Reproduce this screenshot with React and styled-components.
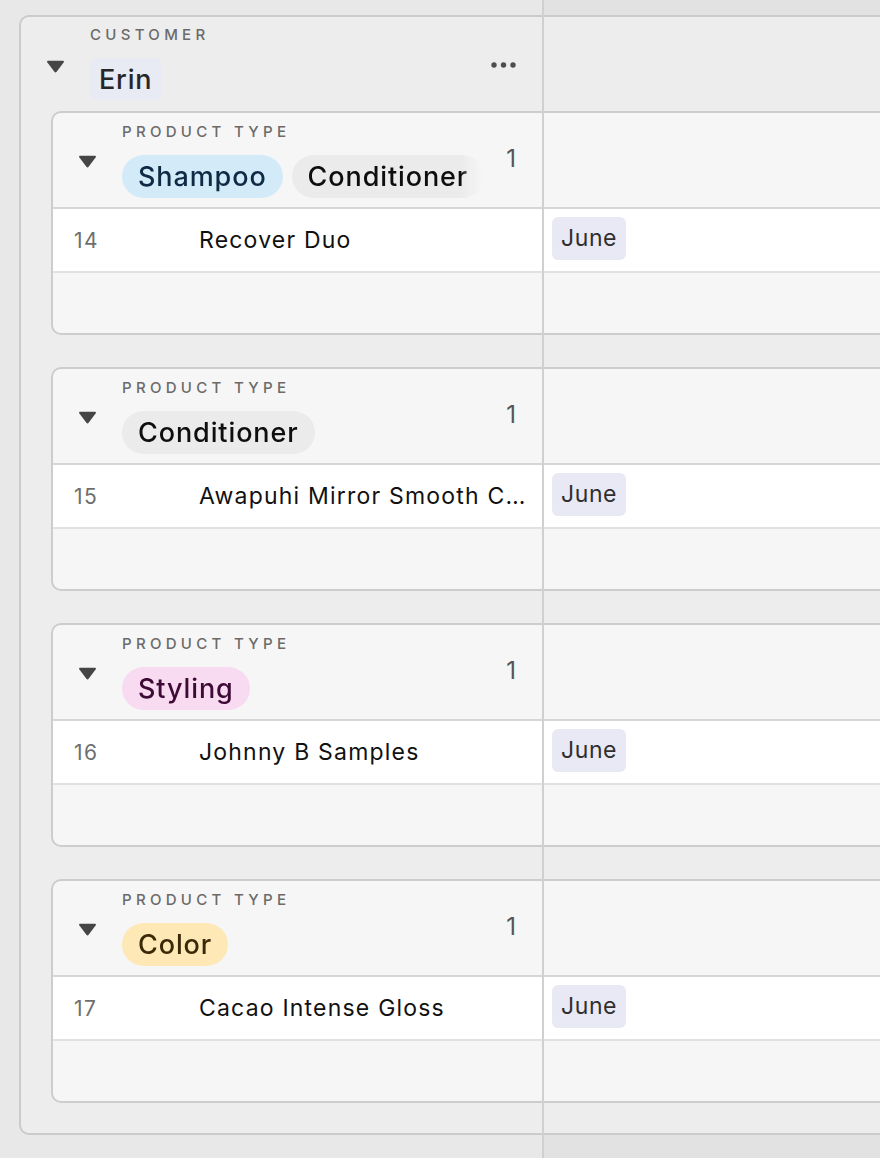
import React from "react";
import styled, { createGlobalStyle } from "styled-components";

const SPLIT = 543;

const GlobalStyle = createGlobalStyle`
  html, body {
    margin: 0;
    padding: 0;
  }
  body {
    font-family: Inter, "Noto Sans", "Liberation Sans", sans-serif;
    background: #e8e8e8;
    overflow: hidden;
  }
`;

const Page = styled.div`
  position: relative;
  min-height: 100vh;
  box-sizing: border-box;
  padding: 15px 0 0 19px;
  overflow: hidden;
  background: linear-gradient(to right, #e8e8e8 ${SPLIT}px, #e2e2e2 ${SPLIT}px);

  /* frozen column rule, drawn over every row */
  &::after {
    content: "";
    position: absolute;
    top: 0;
    bottom: 0;
    left: ${SPLIT - 1}px;
    width: 2px;
    background: #d0d0d0;
    pointer-events: none;
  }
`;

const Group = styled.section`
  width: 1000px;
  box-sizing: border-box;
  border: 2px solid #cbcbcb;
  border-radius: 10px;
  background: #ededed;
  padding-bottom: 30px;
`;

const Card = styled.div`
  margin: 0 0 32px 30px;
  border: 2px solid #cdcdcd;
  border-radius: 10px;
  background: #f6f6f6;
  overflow: hidden;

  &:last-child {
    margin-bottom: 0;
  }
`;

const Header = styled.div`
  display: grid;
  grid-template-columns: ${({ $lead }) => $lead}px 1fr;
  height: 94px;
  border-bottom: ${({ $ruled }) => ($ruled ? "2px solid #d6d6d6" : "none")};
`;

const HeaderMain = styled.div`
  display: flex;
  min-width: 0;
`;

const Toggle = styled.button`
  flex: none;
  width: 69px;
  align-self: flex-start;
  margin-top: ${({ $top }) => $top}px;
  padding: 0 0 0 25px;
  border: 0;
  background: none;
  text-align: left;
  cursor: pointer;

  svg {
    display: block;
  }
`;

const Titles = styled.div`
  flex: 1;
  min-width: 0;
  padding-top: ${({ $top }) => $top}px;
`;

const FieldLabel = styled.div`
  font-size: 15px;
  line-height: 20px;
  font-weight: 500;
  letter-spacing: 4.3px;
  color: #6a6a6a;
  text-transform: uppercase;
  white-space: nowrap;
`;

const Pills = styled.div`
  display: flex;
  gap: 9px;
  margin-top: 13px;
  overflow: hidden;
  -webkit-mask-image: linear-gradient(to right, #000 calc(100% - 22px), transparent);
  mask-image: linear-gradient(to right, #000 calc(100% - 22px), transparent);
`;

const tagTones = {
  blue: { bg: "#d3ebf8", fg: "#0f2a44" },
  gray: { bg: "#ebebeb", fg: "#0e0e0e" },
  pink: { bg: "#f8daf1", fg: "#3d0b35" },
  yellow: { bg: "#fde8b6", fg: "#3a2906" },
};

const Tag = styled.span`
  flex: none;
  display: inline-flex;
  align-items: center;
  height: 43px;
  padding: 0 16px;
  border-radius: 22px;
  font-size: 27px;
  font-weight: 500;
  letter-spacing: 0.9px;
  background: ${({ $tone }) => tagTones[$tone].bg};
  color: ${({ $tone }) => tagTones[$tone].fg};
`;

const NameChip = styled.span`
  display: inline-flex;
  align-items: center;
  height: 42px;
  margin-top: 13px;
  padding: 0 9px;
  border-radius: 6px;
  background: #e8eaf4;
  color: #262626;
  font-size: 27px;
  font-weight: 500;
  letter-spacing: 0.8px;
`;

const Aside = styled.div`
  flex: none;
  width: 60px;
  box-sizing: border-box;
  padding: ${({ $top }) => $top}px 27px 0 0;
  display: flex;
  justify-content: flex-end;
  align-items: flex-start;
`;

const Count = styled.span`
  font-size: 24px;
  line-height: 28px;
  color: #555;
`;

const MoreButton = styled.button`
  border: 0;
  padding: 0;
  background: none;
  cursor: pointer;

  svg {
    display: block;
  }
`;

const Row = styled.div`
  display: grid;
  grid-template-columns: 490px 1fr;
  height: ${({ $blank }) => ($blank ? 60 : 62)}px;
  background: ${({ $blank }) => ($blank ? "transparent" : "#ffffff")};
  border-bottom: ${({ $blank }) => ($blank ? "none" : "2px solid #e1e1e1")};
`;

const PrimaryCell = styled.div`
  display: flex;
  align-items: center;
  min-width: 0;
  padding-right: 14px;
`;

const RowNumber = styled.span`
  flex: none;
  width: 125px;
  padding-left: 21px;
  font-size: 21px;
  letter-spacing: 1.4px;
  color: #6e6e6e;
`;

const RecordName = styled.span`
  min-width: 0;
  overflow: hidden;
  text-overflow: ellipsis;
  white-space: nowrap;
  font-size: 23px;
  letter-spacing: 1.2px;
  color: #111;
`;

const Cell = styled.div`
  display: flex;
  align-items: center;
  padding-left: 9px;
`;

const MonthChip = styled.span`
  display: inline-flex;
  align-items: center;
  height: 43px;
  margin-top: -4px;
  padding: 0 9px;
  border-radius: 6px;
  background: #e8e9f4;
  color: #2f2f2f;
  font-size: 23px;
  letter-spacing: 0.6px;
`;

const Caret = () => (
  <svg width="19" height="13" viewBox="0 0 19 13">
    <path
      d="M2.2 0.8 H16.8 Q18.6 0.8 17.6 2.4 L10.6 11.8 Q9.5 13.2 8.4 11.8 L1.4 2.4 Q0.4 0.8 2.2 0.8 Z"
      fill="#454545"
    />
  </svg>
);

const Dots = () => (
  <svg width="25" height="6" viewBox="0 0 25 6">
    <circle cx="3" cy="3" r="2.7" fill="#4d4d4d" />
    <circle cx="12.5" cy="3" r="2.7" fill="#4d4d4d" />
    <circle cx="22" cy="3" r="2.7" fill="#4d4d4d" />
  </svg>
);

const productGroups = [
  {
    tags: [
      { label: "Shampoo", tone: "blue" },
      { label: "Conditioner", tone: "gray" },
    ],
    records: [{ id: 14, name: "Recover Duo", month: "June" }],
  },
  {
    tags: [{ label: "Conditioner", tone: "gray" }],
    records: [{ id: 15, name: "Awapuhi Mirror Smooth Conditioner", month: "June" }],
  },
  {
    tags: [{ label: "Styling", tone: "pink" }],
    records: [{ id: 16, name: "Johnny B Samples", month: "June" }],
  },
  {
    tags: [{ label: "Color", tone: "yellow" }],
    records: [{ id: 17, name: "Cacao Intense Gloss", month: "June" }],
  },
];

const ProductGroup = ({ tags, records }) => (
  <Card>
    <Header $lead={490} $ruled>
      <HeaderMain>
        <Toggle $top={42} aria-label="Collapse group">
          <Caret />
        </Toggle>
        <Titles $top={9}>
          <FieldLabel>Product type</FieldLabel>
          <Pills>
            {tags.map((t) => (
              <Tag key={t.label} $tone={t.tone}>
                {t.label}
              </Tag>
            ))}
          </Pills>
        </Titles>
        <Aside $top={32}>
          <Count>{records.length}</Count>
        </Aside>
      </HeaderMain>
      <div />
    </Header>
    {records.map((r) => (
      <Row key={r.id}>
        <PrimaryCell>
          <RowNumber>{r.id}</RowNumber>
          <RecordName>{r.name}</RecordName>
        </PrimaryCell>
        <Cell>
          <MonthChip>{r.month}</MonthChip>
        </Cell>
      </Row>
    ))}
    <Row $blank>
      <PrimaryCell />
      <Cell />
    </Row>
  </Card>
);

export default function App() {
  return (
    <>
      <GlobalStyle />
      <Page>
        <Group>
          <Header $lead={522}>
            <HeaderMain>
              <Toggle $top={43} aria-label="Collapse group">
                <Caret />
              </Toggle>
              <Titles $top={8}>
                <FieldLabel>Customer</FieldLabel>
                <NameChip>Erin</NameChip>
              </Titles>
              <Aside $top={45}>
                <MoreButton aria-label="Group options">
                  <Dots />
                </MoreButton>
              </Aside>
            </HeaderMain>
            <div />
          </Header>
          {productGroups.map((g, i) => (
            <ProductGroup key={i} {...g} />
          ))}
        </Group>
      </Page>
    </>
  );
}
